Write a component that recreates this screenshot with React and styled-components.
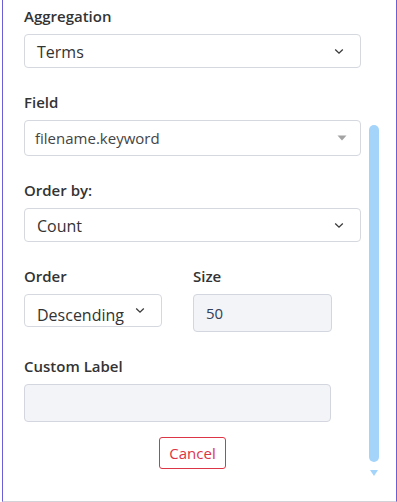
import React from 'react'
import styled, { createGlobalStyle } from 'styled-components'

const GlobalStyle = createGlobalStyle`
    html, body {
        margin: 0;
        padding: 0;
        background: #ffffff;
        font-family: "Open Sans", "Noto Sans", sans-serif;
    }
`;

const Chevron = () => (
    <svg width="10" height="7" viewBox="0 0 10 7">
        <path d="M1.2 1.5 L5 5.2 L8.8 1.5" fill="none" stroke="#3a3a3a" strokeWidth="1.3" />
    </svg>
);

const Caret = () => (
    <svg width="10" height="6" viewBox="0 0 10 6">
        <path d="M0.5 0.5 L9.5 0.5 L5 5.5 Z" fill="#a3a3a3" />
    </svg>
);

export default function App() {
    return (
        <>
            <GlobalStyle />
            <Panel>
                <Form>
                    <Group>
                        <Label>Aggregation</Label>
                        <Select width="337px">
                            <SelectText>Terms</SelectText>
                            <Chevron />
                        </Select>
                    </Group>
                    <Group>
                        <Label>Field</Label>
                        <ComboBox>
                            <ComboText>filename.keyword</ComboText>
                            <Caret />
                        </ComboBox>
                    </Group>
                    <Group>
                        <Label>Order by:</Label>
                        <Select width="337px">
                            <SelectText>Count</SelectText>
                            <Chevron />
                        </Select>
                    </Group>
                    <Row>
                        <Group>
                            <Label>Order</Label>
                            <Select width="138px" $small>
                                <ClippedText>Descending</ClippedText>
                                <Chevron />
                            </Select>
                        </Group>
                        <Group>
                            <Label>Size</Label>
                            <Input width="139px">50</Input>
                        </Group>
                    </Row>
                    <Group>
                        <Label>Custom Label</Label>
                        <Input width="307px" />
                    </Group>
                    <Actions>
                        <CancelButton>Cancel</CancelButton>
                    </Actions>
                </Form>
                <ScrollColumn>
                    <Thumb />
                    <ScrollArrow />
                </ScrollColumn>
            </Panel>
        </>
    );
}

const Panel = styled.div`
    box-sizing: border-box;
    margin-left: 2px;
    width: 395px;
    height: 502px;
    display: flex;
    flex-direction: row;
    border-left: 1px solid #6b5fd8;
    border-right: 1px solid #6b5fd8;
    border-bottom: 1px solid #d2d2d8;
`;

const Form = styled.div`
    display: flex;
    flex-direction: column;
    width: 345px;
    padding: 6px 0 0 21px;
`;

const Group = styled.div`
    display: flex;
    flex-direction: column;
    margin-bottom: 24px;
`;

const Row = styled.div`
    display: flex;
    flex-direction: row;
    gap: 31px;
`;

const Label = styled.label`
    font-size: 15px;
    font-weight: 600;
    line-height: 20px;
    color: #333333;
    margin-bottom: 8px;
`;

const Select = styled.div`
    box-sizing: border-box;
    width: ${props => props.width};
    height: ${props => props.$small ? '33px' : '34px'};
    display: flex;
    align-items: center;
    justify-content: space-between;
    padding: 0 16px 0 12px;
    border: 1px solid #d5d8de;
    border-radius: 4px;
    background: #ffffff;
`;

const SelectText = styled.span`
    font-size: 16px;
    color: #333333;
    padding-top: 2px;
`;

const ClippedText = styled.span`
    font-size: 16px;
    color: #333333;
    line-height: 24px;
    height: 22px;
    margin-top: 6px;
    overflow: hidden;
`;

const ComboBox = styled.div`
    box-sizing: border-box;
    width: 337px;
    height: 36px;
    display: flex;
    align-items: center;
    justify-content: space-between;
    padding: 0 13px 0 10px;
    border: 1px solid #d5d8de;
    border-radius: 4px;
    background: #ffffff;
`;

const ComboText = styled.span`
    font-size: 15px;
    color: #444444;
`;

const Input = styled.div`
    box-sizing: border-box;
    width: ${props => props.width};
    height: 38px;
    display: flex;
    align-items: center;
    padding: 0 12px;
    border: 1px solid #d3d6df;
    border-radius: 4px;
    background: #f3f4f8;
    font-size: 15px;
    color: #34405a;
`;

const Actions = styled.div`
    display: flex;
    justify-content: center;
    width: 337px;
    margin-top: -9px;
`;

const CancelButton = styled.button`
    box-sizing: border-box;
    height: 32px;
    padding: 0 9px;
    border: 1px solid #dc3545;
    border-radius: 3px;
    background: #ffffff;
    color: #dc3545;
    font-family: "Open Sans", "Noto Sans", sans-serif;
    font-size: 15px;
`;

const ScrollColumn = styled.div`
    display: flex;
    flex-direction: column;
    align-items: center;
    width: 10px;
    padding-top: 125px;
`;

const Thumb = styled.div`
    width: 10px;
    height: 337px;
    border-radius: 5px;
    background: #a4d4fa;
`;

const ScrollArrow = styled.div`
    margin-top: 8px;
    width: 0;
    height: 0;
    border-left: 4px solid transparent;
    border-right: 4px solid transparent;
    border-top: 6px solid #a4d4fa;
`;
